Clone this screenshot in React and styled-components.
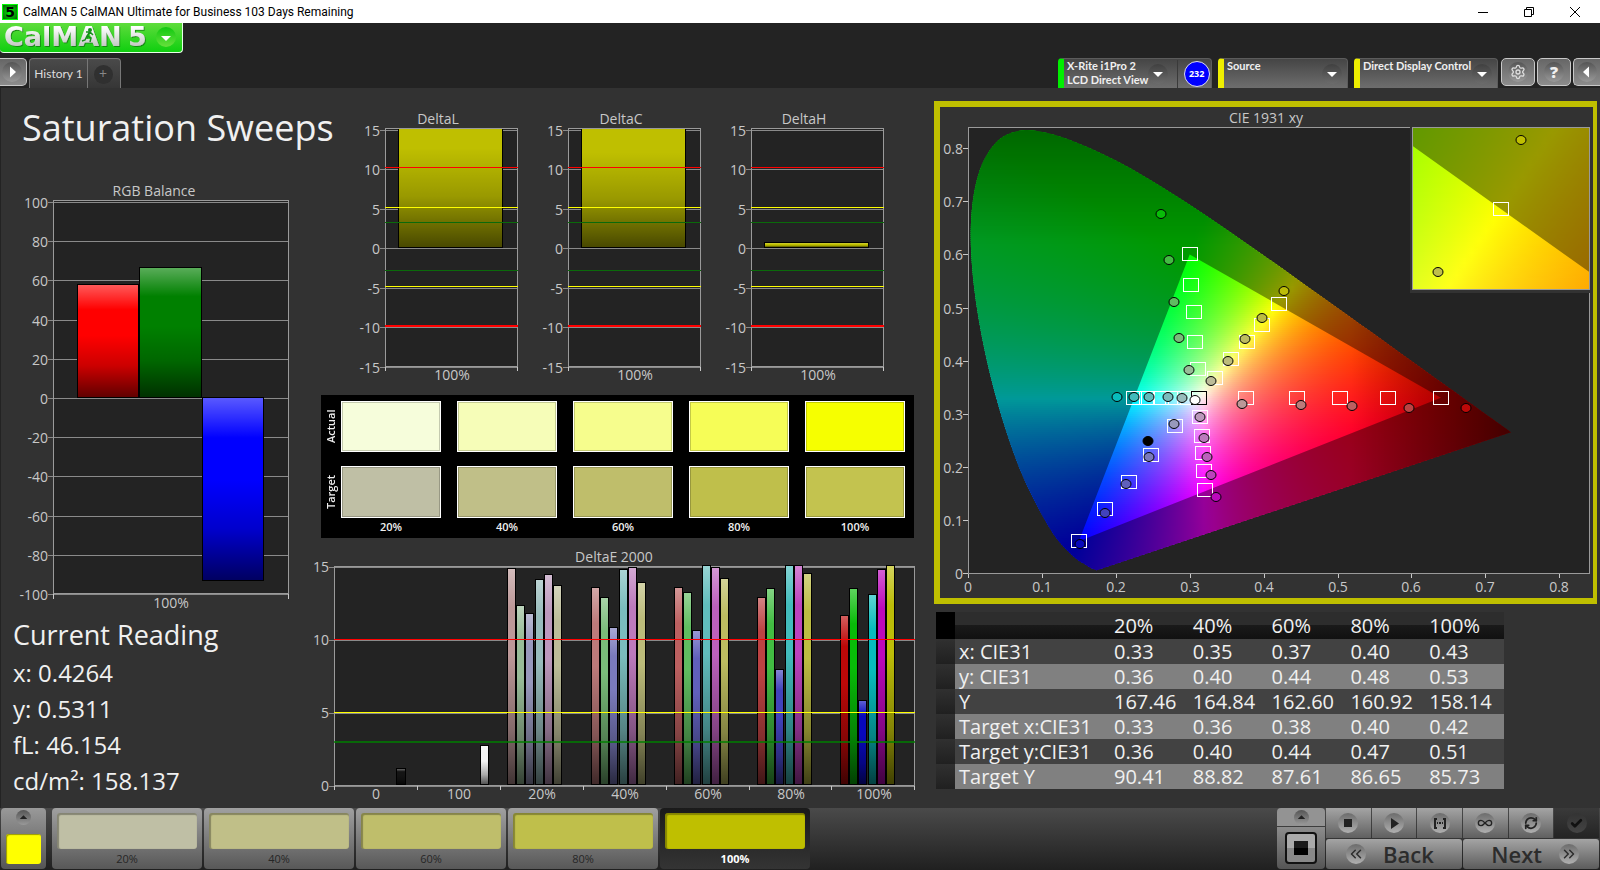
import React from 'react';
import styled, { createGlobalStyle } from 'styled-components';
import { Check, ChevronsLeft, ChevronsRight, Infinity as Loop, RefreshCw, Settings } from 'lucide-react';

const LEVELS = ['20%', '40%', '60%', '80%', '100%'];
const ACTUAL = ['#f6fddb', '#f6fdb8', '#f6fd8d', '#f6fd57', '#f6ff00'];
const TARGET = ['#bfbfa5', '#c0bf88', '#bfbe6b', '#bfbf4b', '#c3c34f'];
const PATTERNS = ['#bfbfa5', '#c0bf88', '#bfbe6b', '#bfbf4b', '#bfbf00'];

const ROWS = [
  ['x: CIE31', '0.33', '0.35', '0.37', '0.40', '0.43'],
  ['y: CIE31', '0.36', '0.40', '0.44', '0.48', '0.53'],
  ['Y', '167.46', '164.84', '162.60', '160.92', '158.14'],
  ['Target x:CIE31', '0.33', '0.36', '0.38', '0.40', '0.42'],
  ['Target y:CIE31', '0.36', '0.40', '0.44', '0.47', '0.51'],
  ['Target Y', '90.41', '88.82', '87.61', '86.65', '85.73'],
];

const LOW = [152, 122, 96, 66, 8];
const HUES = {
  red: [1, 0, 0],
  green: [0, 1, 0],
  blue: [0, 0, 1],
  cyan: [0, 1, 1],
  magenta: [1, 0, 1],
  yellow: [1, 1, 0],
};
const tint = (hue, level) =>
  `rgb(${HUES[hue].map((on) => (on ? 188 : LOW[level])).join(',')})`;

/* ---------- charts ---------- */

const Shades = ({ id }) => (
  <linearGradient id={id} x1="0" y1="0" x2="0" y2="1">
    <stop offset="0" stopColor="#fff" stopOpacity="0.35" />
    <stop offset="0.22" stopColor="#fff" stopOpacity="0" />
    <stop offset="0.45" stopColor="#000" stopOpacity="0" />
    <stop offset="0.72" stopColor="#000" stopOpacity="0.2" />
    <stop offset="1" stopColor="#000" stopOpacity="0.62" />
  </linearGradient>
);

const Bar = ({ x, y, w, h, color, shade }) => (
  <g>
    <rect x={x} y={y} width={w} height={h} fill="#000" />
    <rect x={x + 1} y={y + 1} width={w - 2} height={h - 2} fill={color} />
    <rect x={x + 1} y={y + 1} width={w - 2} height={h - 2} fill={`url(#${shade})`} />
  </g>
);

const Frame = ({ x, y, w, h }) => (
  <>
    <rect x={x} y={y} width={w} height={1} fill="#9a9a9a" />
    <rect x={x} y={y + h - 1} width={w} height={1} fill="#9a9a9a" />
    <rect x={x} y={y} width={1} height={h} fill="#9a9a9a" />
    <rect x={x + w - 1} y={y} width={1} height={h} fill="#9a9a9a" />
  </>
);

const RgbBalance = () => {
  const ticks = [100, 80, 60, 40, 20, 0, -20, -40, -60, -80, -100];
  const at = (v) => Math.round(398 - v * 1.96);
  return (
    <Chart viewBox="0 170 310 445" role="img" aria-label="RGB Balance">
      <defs><Shades id="rgb-shade" /></defs>
      <text x="154" y="196" textAnchor="middle">RGB Balance</text>
      <rect x="53" y="200" width="236" height="394" fill="#232323" />
      {ticks.map((v) => (
        <g key={v}>
          <rect x="48" y={at(v)} width="240" height="1" fill="#8a8a8a" />
          <text x="48" y={at(v) + 6} textAnchor="end">{v}</text>
        </g>
      ))}
      <Frame x={53} y={200} w={236} h={394} />
      <rect x="53" y="594" width="1" height="5" fill="#c8c8c8" />
      <rect x="288" y="594" width="1" height="5" fill="#c8c8c8" />
      <Bar x={77} y={284} w={62} h={114} color="#f00" shade="rgb-shade" />
      <Bar x={139} y={267} w={63} h={131} color="#008000" shade="rgb-shade" />
      <Bar x={202} y={397} w={62} h={184} color="#00f" shade="rgb-shade" />
      <text x="171" y="608" textAnchor="middle">100%</text>
    </Chart>
  );
};

const DeltaChart = ({ title, value }) => {
  const at = (v) => Math.round(248 - v * 7.9);
  const limits = [[10, '#f00'], [5, '#ff0'], [3, '#0a6a0a'], [-3, '#0a6a0a'], [-5, '#ff0'], [-10, '#f00']];
  const shade = `${title}-shade`;
  const clip = `${title}-clip`;
  return (
    <Chart viewBox="0 105 183 285" role="img" aria-label={title}>
      <defs>
        <Shades id={shade} />
        <clipPath id={clip}><rect x="44" y="129" width="133" height="238" /></clipPath>
      </defs>
      <text x="97" y="124" textAnchor="middle">{title}</text>
      <rect x="44" y="128" width="133" height="239" fill="#232323" />
      {[15, 10, 5, 0, -5, -10, -15].map((v) => (
        <g key={v}>
          <rect x="39" y={at(v)} width="137" height="1" fill="#8a8a8a" />
          <text x="39" y={at(v) + 6} textAnchor="end">{v}</text>
        </g>
      ))}
      <Frame x={44} y={128} w={133} h={239} />
      <rect x="44" y="367" width="1" height="4" fill="#c8c8c8" />
      <rect x="176" y="367" width="1" height="4" fill="#c8c8c8" />
      <g clipPath={`url(#${clip})`}>
        <Bar x={57} y={at(value)} w={105} h={248 - at(value)} color="#bfbf00" shade={shade} />
      </g>
      {limits.map(([v, color]) => (
        <rect key={v} x="44" y={at(v) - 2} width="133" height={v === -10 ? 2 : 1} fill={color} />
      ))}
      <text x="111" y="380" textAnchor="middle">100%</text>
    </Chart>
  );
};

const GROUPS = [
  { x: 197, tops: [568, 605, 613, 579, 574, 585] },
  { x: 281, tops: [587, 597, 627, 569, 567, 582] },
  { x: 364, tops: [587, 592, 630, 565, 567, 578] },
  { x: 447, tops: [597, 588, 669, 565, 565, 573] },
  { x: 530, tops: [615, 588, 700, 594, 569, 565] },
];
const SERIES = ['red', 'green', 'blue', 'cyan', 'magenta', 'yellow'];

const DeltaE = () => {
  const at = (v) => Math.round(786 - v * 14.6);
  return (
    <Chart viewBox="0 538 610 270" role="img" aria-label="DeltaE 2000">
      <defs>
        <linearGradient id="de-shade" x1="0" y1="0" x2="0" y2="1">
          <stop offset="0" stopColor="#fff" stopOpacity="0.35" />
          <stop offset="0.18" stopColor="#fff" stopOpacity="0" />
          <stop offset="0.4" stopColor="#000" stopOpacity="0" />
          <stop offset="0.75" stopColor="#000" stopOpacity="0.3" />
          <stop offset="1" stopColor="#000" stopOpacity="0.66" />
        </linearGradient>
      </defs>
      <text x="304" y="562" textAnchor="middle">DeltaE 2000</text>
      <rect x="24" y="566" width="581" height="220" fill="#232323" />
      {[15, 10, 5, 0].map((v) => (
        <g key={v}>
          <rect x="19" y={at(v)} width="585" height="1" fill="#8a8a8a" />
          <text x="19" y={at(v) + 5} textAnchor="end">{v}</text>
        </g>
      ))}
      <Frame x={24} y={566} w={581} h={220} />
      {['0', '100', ...LEVELS].map((label, i) => (
        <text key={label + i} x={66 + i * 83} y="799" textAnchor="middle">{label}</text>
      ))}
      {[0, 1, 2, 3, 4, 5, 6, 7].map((i) => (
        <rect key={i} x={Math.round(24 + i * 82.9)} y="786" width="1" height="4" fill="#c8c8c8" />
      ))}
      <Bar x={86} y={768} w={10} h={17} color="#141414" shade="de-shade" />
      <Bar x={170} y={745} w={9} h={40} color="#f4f4f4" shade="de-shade" />
      {GROUPS.map((group, level) =>
        group.tops.map((top, i) => (
          <Bar
            key={`${level}-${i}`}
            x={group.x + Math.round(i * 9.2)}
            y={top}
            w={9}
            h={785 - top}
            color={tint(SERIES[i], level)}
            shade="de-shade"
          />
        ))
      )}
      <rect x="24" y="639" width="581" height="1" fill="#f00" />
      <rect x="24" y="712" width="581" height="1" fill="#ff0" />
      <rect x="24" y="741" width="581" height="2" fill="#008000" fillOpacity="0.75" />
    </Chart>
  );
};

/* ---------- chromaticity diagram ---------- */

const LOCUS = [
  [0.1741, 0.005], [0.1644, 0.0109], [0.1566, 0.0177], [0.144, 0.0297], [0.1241, 0.0578],
  [0.1096, 0.0868], [0.0913, 0.1327], [0.0687, 0.2007], [0.0454, 0.295], [0.0235, 0.4127],
  [0.0082, 0.5384], [0.0039, 0.6548], [0.0139, 0.7502], [0.0389, 0.812], [0.0743, 0.8338],
  [0.1142, 0.8262], [0.1547, 0.8059], [0.1929, 0.7816], [0.2296, 0.7543], [0.3016, 0.6923],
  [0.3731, 0.6245], [0.4441, 0.5547], [0.5125, 0.4866], [0.5752, 0.4242], [0.627, 0.3725],
  [0.6658, 0.334], [0.7079, 0.292], [0.7347, 0.2653],
];
const PRIMARIES = [[0.64, 0.33], [0.3, 0.6], [0.15, 0.06]];

const main = {
  px: (x) => 968 + x * 739,
  py: (y) => 573 - y * 531,
  cx: (px) => (px - 968) / 739,
  cy: (py) => (573 - py) / 531,
};
const inset = {
  px: (x) => 1501 + (x - 0.4193) * 2956,
  py: (y) => 209 - (y - 0.5053) * 2655,
  cx: (px) => 0.4193 + (px - 1501) / 2956,
  cy: (py) => 0.5053 + (209 - py) / 2655,
};

const spectral = (x, yRaw) => {
  const y = Math.max(yRaw, 0.004);
  const X = x / y;
  const Z = (1 - x - y) / y;
  const rgb = [
    3.2406 * X - 1.5372 - 0.4986 * Z,
    -0.9689 * X + 1.8758 + 0.0415 * Z,
    0.0557 * X - 0.204 + 1.057 * Z,
  ].map((c) => Math.max(c, 0));
  const top = Math.max(...rgb) || 1;
  const fade = 1 - Math.max(0, x - 0.52) * 2.6 - Math.max(0, y - 0.62) * 1.5;
  return `rgb(${rgb.map((c) => Math.round((c / top) * 255 * fade)).join(',')})`;
};

// horizontal bands, each with its own gradient
const Spectrum = ({ id, scale, x, y, w, h, step, stops }) => {
  const bands = [];
  for (let top = y; top < y + h; top += step) {
    const height = Math.min(step + 1, y + h - top);
    const marks = [];
    for (let i = 0; i <= stops; i += 1) {
      const px = x + (w * i) / stops;
      marks.push(
        <stop key={i} offset={i / stops} stopColor={spectral(scale.cx(px), scale.cy(top + step / 2))} />
      );
    }
    bands.push(
      <g key={top}>
        <linearGradient id={`${id}-${top}`}>{marks}</linearGradient>
        <rect x={x} y={top} width={w} height={height} fill={`url(#${id}-${top})`} />
      </g>
    );
  }
  return <g shapeRendering="crispEdges">{bands}</g>;
};

const locusPath = (() => {
  const p = LOCUS.map(([x, y]) => [main.px(x), main.py(y)]);
  let d = `M${p[0].join(' ')}`;
  for (let i = 0; i < p.length - 1; i += 1) {
    const a = p[Math.max(i - 1, 0)];
    const b = p[i];
    const c = p[i + 1];
    const e = p[Math.min(i + 2, p.length - 1)];
    d += `C${b[0] + (c[0] - a[0]) / 6} ${b[1] + (c[1] - a[1]) / 6} ${c[0] - (e[0] - b[0]) / 6} ${c[1] - (e[1] - b[1]) / 6} ${c[0]} ${c[1]}`;
  }
  return `${d}Z`;
})();
const triangle = (s) => `M${PRIMARIES.map(([x, y]) => `${s.px(x)} ${s.py(y)}`).join('L')}Z`;

const TARGETS = {
  green: [[1198, 369], [1195, 342], [1194, 312], [1191, 285], [1190, 254]],
  yellow: [[1215, 378], [1231, 359], [1247, 342], [1262, 325], [1279, 304]],
  red: [[1246, 398], [1297, 398], [1340, 398], [1388, 398], [1441, 398]],
  cyan: [[1185, 398], [1173, 398], [1161, 398], [1147, 398], [1134, 398]],
  magenta: [[1200, 417], [1202, 436], [1203, 453], [1204, 471], [1205, 490]],
  blue: [[1175, 426], [1151, 455], [1129, 482], [1105, 509], [1079, 541]],
};
const MEASURED = {
  green: [[1189, 370], [1179, 338], [1174, 302], [1169, 260], [1161, 214]],
  yellow: [[1211, 381], [1228, 361], [1245, 339], [1262, 318], [1284, 291]],
  red: [[1242, 404], [1301, 405], [1352, 406], [1409, 408], [1466, 408]],
  cyan: [[1182, 398], [1168, 397], [1149, 397], [1134, 397], [1117, 397]],
  magenta: [[1200, 417], [1204, 438], [1207, 457], [1211, 475], [1216, 497]],
  blue: [[1174, 424], [1149, 457], [1126, 484], [1105, 513], [1080, 544]],
};

const Target = ({ x, y, stroke = '#fff' }) => (
  <rect x={x - 7.5} y={y - 6.5} width="15" height="13" fill="none" stroke={stroke} />
);
const Reading = ({ x, y, fill }) => (
  <ellipse cx={x} cy={y} rx="5" ry="4.5" fill={fill} stroke="#000" />
);

const CieChart = () => (
  <Chart viewBox="940 107 653 491" role="img" aria-label="CIE 1931 xy">
    <defs>
      <clipPath id="locus"><path d={locusPath} /></clipPath>
      <clipPath id="inset"><rect x="1413" y="128" width="176" height="161" /></clipPath>
    </defs>
    <text x="1266" y="123" textAnchor="middle">CIE 1931 xy</text>
    <rect x="968" y="127" width="622" height="447" fill="#232323" />
    <g clipPath="url(#locus)">
      <Spectrum id="sp" scale={main} x={968} y={128} w={550} h={445} step={2} stops={56} />
      <path d={`M968 127H1590V573H968Z${triangle(main)}`} fillRule="evenodd" fill="#000" fillOpacity="0.4" />
    </g>
    <Frame x={968} y={127} w={622} h={447} />
    {[0, 1, 2, 3, 4, 5, 6, 7, 8].map((n) => (
      <g key={n}>
        <rect x="963" y={Math.round(main.py(n / 10))} width="5" height="1" fill="#c8c8c8" />
        <rect x={Math.round(main.px(n / 10))} y="574" width="1" height="4" fill="#c8c8c8" />
        <text x="963" y={Math.round(main.py(n / 10)) + 6} textAnchor="end">{n ? `0.${n}` : '0'}</text>
        <text x={Math.round(main.px(n / 10))} y="592" textAnchor="middle">{n ? `0.${n}` : '0'}</text>
      </g>
    ))}
    {Object.keys(TARGETS).map((hue) =>
      TARGETS[hue].map(([x, y]) => <Target key={`${hue}${x}${y}`} x={x} y={y} />)
    )}
    <Target x={1199} y={398} stroke="#000" />
    {Object.keys(MEASURED).map((hue) =>
      MEASURED[hue].map(([x, y], level) => (
        <Reading key={`${hue}${x}${y}`} x={x} y={y} fill={tint(hue, level)} />
      ))
    )}
    <Reading x={1148} y={441} fill="#000" />
    <Reading x={1195} y={400} fill="#fff" />

    <rect x="1410" y="125" width="182" height="168" fill="#323232" />
    <g clipPath="url(#inset)">
      <Spectrum id="in" scale={inset} x={1413} y={128} w={176} h={161} step={2} stops={24} />
      <path d={`M1413 128H1589V289H1413Z${triangle(inset)}`} fillRule="evenodd" fill="#000" fillOpacity="0.4" />
    </g>
    <Frame x={1412} y={127} w={178} h={163} />
    <Target x={1501} y={209} />
    <Reading x={1521} y={140} fill="#bfbf00" />
    <Reading x={1438} y={272} fill="#bfbf4b" />
  </Chart>
);

/* ---------- small drawings ---------- */

const Knob = ({ size = 20, dir = 'down', tone = 'dark', color = '#fff' }) => {
  const arrows = {
    down: 'M5 8h10l-5 5z',
    up: 'M5 12h10l-5-5z',
    right: 'M8 4.5v11l6-5.5z',
    left: 'M12 4.5v11l-6-5.5z',
  };
  return (
    <Disc $size={size} $tone={tone}>
      <svg width={size} height={size} viewBox="0 0 20 20"><path d={arrows[dir]} fill={color} /></svg>
    </Disc>
  );
};

const Logo = () => (
  <svg width="182" height="30" viewBox="0 0 182 30" role="img" aria-label="CalMAN 5">
    <defs>
      <linearGradient id="silver" x1="0" y1="0" x2="0" y2="1">
        <stop offset="0.2" stopColor="#fff" />
        <stop offset="0.8" stopColor="#c4c9c4" />
      </linearGradient>
      <linearGradient id="lime" x1="0" y1="0" x2="0" y2="1">
        <stop offset="0" stopColor="#10c810" />
        <stop offset="1" stopColor="#67e03c" />
      </linearGradient>
      <filter id="drop" x="-5%" y="-10%" width="115%" height="130%">
        <feDropShadow dx="1" dy="1" stdDeviation="0.5" floodColor="#0a7a0a" floodOpacity="0.8" />
      </filter>
    </defs>
    <g fontFamily="'DejaVu Sans', sans-serif" fontWeight="700" fontSize="27" filter="url(#drop)" fill="url(#silver)">
      <text x="4" y="23">CalMAN</text>
      <text x="128" y="23">5</text>
    </g>
    <circle cx="90" cy="7" r="2" fill="#14901a" />
    <path d="M90 9l-3 4 4 2-1 4M87 13l-2 4-3 1M86 9h4l3 3" fill="none" stroke="#14901a" strokeWidth="1.5" />
    <circle cx="166" cy="14" r="10" fill="url(#lime)" />
    <path d="M161 13h10l-5 5z" fill="#fff" />
  </svg>
);

const TransportIcon = ({ name }) => {
  if (name === 'Loop') return <Loop size={16} />;
  if (name === 'Refresh') return <RefreshCw size={14} strokeWidth={3} />;
  if (name === 'Accept') return <Check size={13} strokeWidth={5} />;
  return (
    <svg width="14" height="14" viewBox="0 0 14 14" fill="currentColor">
      {name === 'Stop' && <path d="M3 3h8v8H3z" />}
      {name === 'Play' && <path d="M4 2v11l8-5.5z" />}
      {name === 'Series' && (
        <path d="M1 2h3v2H3v7h1v2H1zM13 2h-3v2h1v7h-1v2h3zM4 6h1v2H4zM6 6h2v2H6zM9 6h1v2H9z" />
      )}
    </svg>
  );
};

/* ---------- page ---------- */

const App = () => (
  <Page>
    <GlobalStyle />
    <TitleBar>
      <AppIcon>5</AppIcon>
      <WindowTitle>CalMAN 5 CalMAN Ultimate for Business 103 Days Remaining</WindowTitle>
      <WindowButton aria-label="Minimize">
        <svg width="12" height="12"><path d="M1 6.5h10" /></svg>
      </WindowButton>
      <WindowButton aria-label="Restore">
        <svg width="12" height="12"><path d="M1.500 3.500h7v7h-7zM3.500 3.500v-2h7v7h-2" /></svg>
      </WindowButton>
      <WindowButton aria-label="Close">
        <svg width="12" height="12"><path d="M1 1l10 10M11 1L1 11" /></svg>
      </WindowButton>
    </TitleBar>

    <Header>
      <LogoButton><Logo /></LogoButton>
      <TabRow>
        <SquareButton $edge="left" aria-label="Show workflow"><Knob dir="right" tone="light" /></SquareButton>
        <HistoryTab>History 1</HistoryTab>
        <AddTab aria-label="Add tab"><span>+</span></AddTab>
        <Spacer />
        <Device $bar="#00ee00" $w={154}>
          <DeviceText>X-Rite i1Pro 2<br />LCD Direct View</DeviceText>
          <Knob />
          <MeterState><Badge>232</Badge></MeterState>
        </Device>
        <Device $bar="#eeee00" $w={130} $pad>
          <DeviceText>Source</DeviceText>
          <Knob />
        </Device>
        <Device $bar="#eeee00" $w={144} $pad>
          <DeviceText>Direct Display Control</DeviceText>
          <Knob />
        </Device>
        <SquareButton aria-label="Settings">
          <Disc $size={20} $tone="light"><Settings size={16} color="#ddd" /></Disc>
        </SquareButton>
        <SquareButton aria-label="Help">
          <Disc $size={20} $tone="light"><Question>?</Question></Disc>
        </SquareButton>
        <SquareButton $edge="right" aria-label="Collapse"><Knob dir="left" tone="light" /></SquareButton>
      </TabRow>
    </Header>

    <Main>
      <Column>
        <Heading>Saturation Sweeps</Heading>
        <RgbBalance />
        <ReadingTitle>Current Reading</ReadingTitle>
        <ReadingLine>x: 0.4264</ReadingLine>
        <ReadingLine>y: 0.5311</ReadingLine>
        <ReadingLine>fL: 46.154</ReadingLine>
        <ReadingLine>cd/m²: 158.137</ReadingLine>
      </Column>

      <Column>
        <DeltaRow>
          <DeltaChart title="DeltaL" value={23} />
          <DeltaChart title="DeltaC" value={22} />
          <DeltaChart title="DeltaH" value={0.8} />
        </DeltaRow>
        <SwatchPanel>
          <SwatchRow $h={51}>
            <SideLabel>Actual</SideLabel>
            <SwatchGrid>{ACTUAL.map((color) => <Swatch key={color} $color={color} />)}</SwatchGrid>
          </SwatchRow>
          <SwatchRow $h={52}>
            <SideLabel>Target</SideLabel>
            <SwatchGrid>{TARGET.map((color) => <Swatch key={color} $color={color} />)}</SwatchGrid>
          </SwatchRow>
          <SwatchLabels>{LEVELS.map((level) => <span key={level}>{level}</span>)}</SwatchLabels>
        </SwatchPanel>
        <DeltaE />
      </Column>

      <Column>
        <CiePanel><CieChart /></CiePanel>
        <DataTable>
          <thead>
            <tr>
              <Selector as="th" $head />
              <HeadCell $label />
              {LEVELS.map((level) => <HeadCell key={level} scope="col">{level}</HeadCell>)}
            </tr>
          </thead>
          <tbody>
            {ROWS.map(([label, ...values]) => (
              <DataRow key={label}>
                <Selector />
                <RowLabel scope="row">{label}</RowLabel>
                {values.map((value, i) => <Cell key={i}>{value}</Cell>)}
              </DataRow>
            ))}
          </tbody>
        </DataTable>
      </Column>
    </Main>

    <Footer>
      <PatternSource aria-label="Current pattern">
        <Knob size={15} dir="up" tone="light" color="#222" />
        <CurrentColor />
      </PatternSource>
      {LEVELS.map((level, i) => (
        <PatternButton key={level} $active={i === 4}>
          <PatternColor $color={PATTERNS[i]} />
          {level}
        </PatternButton>
      ))}
      <Spacer />
      <Window>
        <WindowMenu aria-label="Pattern window options">
          <Knob size={15} dir="up" tone="light" color="#222" />
        </WindowMenu>
        <WindowMode aria-label="Pattern window"><WindowGlyph /></WindowMode>
      </Window>
      <Transport>
        {['Stop', 'Play', 'Series', 'Loop', 'Refresh', 'Accept'].map((name) => (
          <TransportButton key={name} aria-label={name} $off={name === 'Accept'}>
            <Disc $size={20} $tone={name === 'Accept' ? 'off' : 'key'}><TransportIcon name={name} /></Disc>
          </TransportButton>
        ))}
        <StepButton>
          <Disc $size={20} $tone="key"><ChevronsLeft size={18} /></Disc>
          Back
        </StepButton>
        <StepButton $end>
          Next
          <Disc $size={20} $tone="key"><ChevronsRight size={18} /></Disc>
        </StepButton>
      </Transport>
    </Footer>
  </Page>
);

const GlobalStyle = createGlobalStyle`
  * { box-sizing: border-box; }
  body {
    margin: 0;
    background: #323232;
    color: #f0f0f0;
    font-family: 'Open Sans', 'Noto Sans', sans-serif;
  }
  button {
    margin: 0;
    padding: 0;
    border: 0;
    color: inherit;
    font-family: inherit;
    cursor: pointer;
  }
`;

const Page = styled.div`
  min-height: 100vh;
  display: flex;
  flex-direction: column;
`;

const Spacer = styled.div`
  flex: 1;
`;

const TitleBar = styled.header`
  height: 23px;
  display: flex;
  align-items: center;
  padding: 0 2px;
  background: #fff;
  color: #000;
`;

const AppIcon = styled.span`
  width: 16px;
  height: 16px;
  border: 1px solid #0f0;
  background: radial-gradient(#0f0, #0a5a0a);
  color: #000;
  font: 700 14px/14px 'DejaVu Sans', sans-serif;
  text-align: center;
`;

const WindowTitle = styled.span`
  flex: 1;
  padding-left: 5px;
  font-family: Roboto, sans-serif;
  font-size: 12px;
  white-space: nowrap;
`;

const WindowButton = styled.button`
  width: 46px;
  height: 20px;
  background: transparent;

  svg {
    display: block;
    margin: 0 auto;
    fill: none;
    stroke: #000;
  }
`;

const Header = styled.div`
  background: #232323;
`;

const LogoButton = styled.button`
  display: block;
  width: 183px;
  height: 30px;
  border: 1px solid #e8ffe8;
  border-top: 0;
  border-left: 0;
  border-radius: 0 0 4px 4px;
  background: linear-gradient(#5fdc3c, #0fcf0f);

  svg {
    display: block;
    overflow: visible;
  }
`;

const TabRow = styled.nav`
  display: flex;
  align-items: flex-start;
  padding-top: 5px;
`;

const SquareButton = styled.button`
  width: ${({ $edge }) => ($edge ? '27px' : '34px')};
  height: 28px;
  padding-right: ${({ $edge }) => ($edge === 'left' ? '2px' : '0')};
  margin-right: ${({ $edge }) => ($edge === 'right' ? '0' : '2px')};
  display: flex;
  align-items: center;
  justify-content: center;
  border: 1px solid #c8c8c8;
  border-radius: ${({ $edge }) => ($edge === 'left' ? '0 5px 5px 0' : $edge === 'right' ? '5px 0 0 5px' : '5px')};
  border-left-width: ${({ $edge }) => ($edge === 'left' ? '0' : '1px')};
  border-right-width: ${({ $edge }) => ($edge === 'right' ? '0' : '1px')};
  background: linear-gradient(#666, #8c8c8c);
`;

const HistoryTab = styled.button`
  width: 59px;
  height: 30px;
  border: 1px solid #777;
  border-bottom: 0;
  border-radius: 4px 0 0 0;
  background: linear-gradient(#4a4a4a, #363636);
  color: #ddd;
  font: 700 12px/14px Lato, sans-serif;
  font-weight: 400;
`;

const AddTab = styled.button`
  width: 33px;
  height: 30px;
  padding: 2px 2px 0 0;
  display: grid;
  place-items: center;
  border: 1px solid #777;
  border-left: 0;
  border-bottom: 0;
  border-radius: 0 4px 0 0;
  background: linear-gradient(#4a4a4a, #363636);

  span {
    width: 19px;
    height: 19px;
    border-radius: 50%;
    background: #303030;
    color: #888;
    font-size: 14px;
    line-height: 18px;
  }
`;

const Device = styled.button`
  width: ${({ $w }) => $w}px;
  height: 30px;
  padding-right: ${({ $pad }) => ($pad ? '5px' : '0')};
  margin-right: ${({ $w }) => ($w === 144 ? '3px' : '6px')};
  display: flex;
  align-items: center;
  border: 1px solid #5c5c5c;
  border-bottom: 0;
  border-left: 6px solid ${({ $bar }) => $bar};
  border-radius: 4px 4px 0 0;
  background: linear-gradient(#454545, #6e6e6e);
  color: #f0f0f0;
`;

const DeviceText = styled.span`
  flex: 1;
  align-self: flex-start;
  padding-left: 3px;
  font: 700 11px/14px Lato, sans-serif;
  text-align: left;
  white-space: nowrap;
`;

const MeterState = styled.span`
  width: 35px;
  height: 28px;
  padding-left: 4px;
  margin-left: 9px;
  display: grid;
  place-items: center;
  border-left: 1px solid #3a3a3a;
`;

const Badge = styled.span`
  width: 26px;
  height: 26px;
  border: 1px solid #dde;
  border-radius: 50%;
  background: #00f;
  color: #fff;
  font-size: 9px;
  font-weight: 700;
  line-height: 24px;
  text-align: center;
`;

const DISCS = {
  dark: 'linear-gradient(#404040, #6c6c6c)',
  light: 'linear-gradient(#555, #999)',
  key: 'linear-gradient(#6c6c6c, #b0b0b0)',
  off: 'linear-gradient(#333, #444)',
};

const Disc = styled.span`
  flex: none;
  width: ${({ $size }) => $size}px;
  height: ${({ $size }) => $size}px;
  display: flex;
  align-items: center;
  justify-content: center;
  border-radius: 50%;
  background: ${({ $tone }) => DISCS[$tone]};
`;

const Question = styled.span`
  font-size: 16px;
  font-weight: 800;
  line-height: 20px;
`;

const Main = styled.main`
  flex: 1;
  display: grid;
  grid-template-columns: minmax(0, 310fr) minmax(0, 610fr) minmax(0, 680fr);
  background: #323232;
  box-shadow: inset 1px 0 0 #232323;
`;

const Column = styled.section`
  min-width: 0;
`;

const Chart = styled.svg`
  display: block;
  width: 100%;
  height: auto;
  overflow: visible;
  shape-rendering: crispEdges;

  text {
    fill: #c8c8c8;
    font-size: 14px;
  }

  ellipse,
  path {
    shape-rendering: auto;
  }
`;

const Heading = styled.h1`
  margin: 0;
  padding-left: 22px;
  font-size: 36px;
  font-weight: 400;
  line-height: 80px;
  height: 82px;
  white-space: nowrap;
`;

const ReadingTitle = styled.h2`
  margin: 0;
  padding-left: 13px;
  font-size: 27px;
  font-weight: 400;
  line-height: 40px;
`;

const ReadingLine = styled.p`
  margin: 0;
  padding-left: 13px;
  font-size: 24px;
  line-height: 36px;
`;

const DeltaRow = styled.div`
  display: grid;
  grid-template-columns: repeat(3, minmax(0, 1fr));
  padding: 17px 30px 0 31px;
`;

const SwatchPanel = styled.div`
  height: 143px;
  margin: 5px 6px 0 11px;
  padding: 6px 9px 0 0;
  background: #000;
`;

const SwatchRow = styled.div`
  height: ${({ $h }) => $h}px;
  margin-bottom: ${({ $h }) => ($h === 51 ? '14px' : '0')};
  display: grid;
  grid-template-columns: 20px minmax(0, 1fr);
`;

const SideLabel = styled.span`
  writing-mode: vertical-rl;
  transform: rotate(180deg);
  font-size: 11px;
  font-weight: 600;
  line-height: 20px;
  text-align: center;
`;

const SwatchGrid = styled.div`
  display: grid;
  grid-template-columns: repeat(5, minmax(0, 1fr));
  gap: 16px;
`;

const Swatch = styled.span`
  border: 1px solid #fff;
  background: ${({ $color }) => $color};
  box-shadow: inset 0 0 0 1px rgba(0, 0, 0, 0.2);
`;

const SwatchLabels = styled(SwatchGrid)`
  padding-left: 20px;
  font-size: 11px;
  font-weight: 600;
  line-height: 18px;
  text-align: center;
`;

const CiePanel = styled.div`
  margin: 13px 3px 0 14px;
  border: 6px solid #bfbf00;
  border-right-width: 4px;
`;

const DataTable = styled.table`
  width: 568px;
  margin: 8px 0 0 16px;
  table-layout: fixed;
  border-collapse: collapse;
  font-size: 20px;
  line-height: 25px;
  text-align: left;
`;

const Selector = styled.td`
  width: 19px;
  padding: 0;
  background: ${({ $head }) => ($head ? '#000' : 'linear-gradient(#303030, #202020)')};
`;

const HeadCell = styled.th`
  width: ${({ $label }) => ($label ? '155px' : 'auto')};
  height: 27px;
  padding: 0 4px;
  background: linear-gradient(#2d2d2d 0, #2d2d2d 48%, #1a1a1a 48%, #111 100%);
  font-weight: 400;
`;

const DataRow = styled.tr`
  height: 25px;
  background: #424242;

  &:nth-child(even) {
    background: #808080;
  }
`;

const RowLabel = styled.th`
  padding: 0 4px;
  font-weight: 400;
  white-space: nowrap;
`;

const Cell = styled.td`
  padding: 0 4px;
`;

const Footer = styled.footer`
  height: 62px;
  display: flex;
  align-items: flex-start;
  padding-right: 1px;
  background: linear-gradient(#4a4a4a, #202020);
`;

const PatternSource = styled.button`
  width: 45px;
  height: 61px;
  margin: 0 6px 0 1px;
  padding: 2px 5px 5px;
  display: flex;
  flex-direction: column;
  align-items: center;
  justify-content: space-between;
  border-radius: 4px;
  background: linear-gradient(#999, #555);
`;

const CurrentColor = styled.span`
  width: 35px;
  height: 30px;
  border-radius: 3px;
  background: #ff0;
  box-shadow: inset 1px 1px 1px #999900;
`;

const PatternButton = styled.button`
  width: 150px;
  height: 61px;
  margin-right: 2px;
  padding: 5px 5px 0;
  border-radius: 4px;
  background: ${({ $active }) => ($active ? 'linear-gradient(#1a1a1a, #343434)' : 'linear-gradient(#a0a0a0, #585858)')};
  color: ${({ $active }) => ($active ? '#fff' : '#262626')};
  font-size: 11px;
  font-weight: ${({ $active }) => ($active ? 700 : 400)};
  line-height: 20px;
`;

const PatternColor = styled.span`
  display: block;
  height: 36px;
  border-radius: 3px;
  background: ${({ $color }) => $color};
  box-shadow: inset 1px 1px 1px 1px rgba(0, 0, 0, 0.3);
`;

const Window = styled.div`
  width: 48px;
  height: 61px;
  margin-right: 1px;
  display: flex;
  flex-direction: column;
  gap: 1px;
`;

const WindowMenu = styled.button`
  height: 18px;
  display: grid;
  place-items: center;
  border-radius: 4px 4px 0 0;
  background: #939393;
`;

const WindowMode = styled.button`
  flex: 1;
  display: grid;
  place-items: center;
  border-radius: 0 0 4px 4px;
  background: linear-gradient(#8c8c8c, #555);
`;

const WindowGlyph = styled.span`
  width: 32px;
  height: 32px;
  border: 2px solid #111;
  border-radius: 4px;
  background: linear-gradient(#1a1a1a 50%, #000 50%) center / 14px 14px no-repeat,
    linear-gradient(#aaa 50%, #888 50%);
`;

const Transport = styled.div`
  width: 273px;
  display: grid;
  grid-template-columns: repeat(6, minmax(0, 1fr));
  grid-template-rows: 30px 30px;
  gap: 1px;
`;

const TransportButton = styled.button`
  display: grid;
  place-items: center;
  background: ${({ $off }) => ($off ? 'linear-gradient(#3a3a3a, #242424)' : 'linear-gradient(#a4a4a4, #606060)')};
  color: ${({ $off }) => ($off ? '#111' : '#222')};
`;

const StepButton = styled.button`
  grid-column: span 3;
  padding: 0 20px;
  display: flex;
  align-items: center;
  justify-content: ${({ $end }) => ($end ? 'flex-end' : 'flex-start')};
  gap: 17px;
  border-radius: 3px;
  background: linear-gradient(#a4a4a4, #5c5c5c);
  color: #2c2c2c;
  font-size: 22px;
  font-weight: 600;
  line-height: 28px;
`;

export default App;
